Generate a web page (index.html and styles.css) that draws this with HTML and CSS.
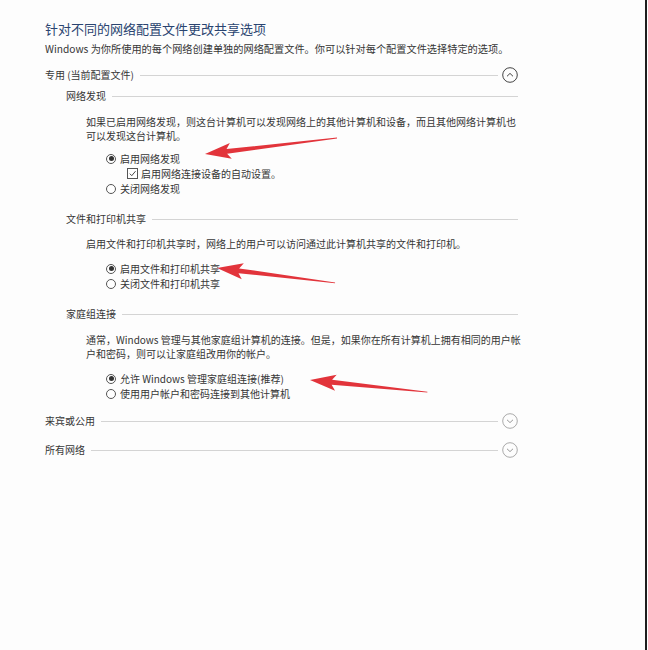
FILE: index.html
```html
<!DOCTYPE html>
<html lang="zh-CN">
<head>
<meta charset="utf-8">
<title>高级共享设置</title>
<link rel="stylesheet" href="styles.css">
</head>
<body>
<div class="page">
  <div class="content">
    <h1 class="title">针对不同的网络配置文件更改共享选项</h1>
    <p class="intro">Windows 为你所使用的每个网络创建单独的网络配置文件。你可以针对每个配置文件选择特定的选项。</p>

    <div class="profile-row">
      <span class="profile-name">专用 (当前配置文件)</span>
      <span class="rule"></span>
      <span class="chev chev-open">
        <svg viewBox="0 0 16 16" width="16" height="16"><circle cx="8" cy="8" r="7.3" fill="none" stroke="#444" stroke-width="1"/><path d="M5 9.3 L8 6.4 L11 9.3" fill="none" stroke="#444" stroke-width="1"/></svg>
      </span>
    </div>

    <div class="section">
      <div class="sec-row first"><span class="sec-name">网络发现</span><span class="rule"></span></div>
      <p class="desc">如果已启用网络发现，则这台计算机可以发现网络上的其他计算机和设备，而且其他网络计算机也<br>可以发现这台计算机。</p>
      <div class="options opt-a">
        <div class="opt"><span class="radio on"></span>启用网络发现</div>
        <div class="opt sub"><span class="check"><svg viewBox="0 0 10 10" width="10" height="10"><path d="M2 5.2 L4.2 7.4 L8.4 2.4" fill="none" stroke="#333" stroke-width="1"/></svg></span>启用网络连接设备的自动设置。</div>
        <div class="opt"><span class="radio"></span>关闭网络发现</div>
      </div>

      <div class="sec-row"><span class="sec-name">文件和打印机共享</span><span class="rule"></span></div>
      <p class="desc d2">启用文件和打印机共享时，网络上的用户可以访问通过此计算机共享的文件和打印机。</p>
      <div class="options opt-b">
        <div class="opt"><span class="radio on"></span>启用文件和打印机共享</div>
        <div class="opt"><span class="radio"></span>关闭文件和打印机共享</div>
      </div>

      <div class="sec-row"><span class="sec-name">家庭组连接</span><span class="rule"></span></div>
      <p class="desc">通常，Windows 管理与其他家庭组计算机的连接。但是，如果你在所有计算机上拥有相同的用户帐<br>户和密码，则可以让家庭组改用你的帐户。</p>
      <div class="options opt-b">
        <div class="opt"><span class="radio on"></span>允许 Windows 管理家庭组连接(推荐)</div>
        <div class="opt"><span class="radio"></span>使用用户帐户和密码连接到其他计算机</div>
      </div>
    </div>

    <div class="profile-row closed">
      <span class="profile-name">来宾或公用</span>
      <span class="rule"></span>
      <span class="chev">
        <svg viewBox="0 0 16 16" width="16" height="16"><circle cx="8" cy="8" r="7.3" fill="none" stroke="#aaa" stroke-width="1"/><path d="M5 6.8 L8 9.6 L11 6.8" fill="none" stroke="#999" stroke-width="1"/></svg>
      </span>
    </div>
    <div class="profile-row closed">
      <span class="profile-name">所有网络</span>
      <span class="rule"></span>
      <span class="chev">
        <svg viewBox="0 0 16 16" width="16" height="16"><circle cx="8" cy="8" r="7.3" fill="none" stroke="#aaa" stroke-width="1"/><path d="M5 6.8 L8 9.6 L11 6.8" fill="none" stroke="#999" stroke-width="1"/></svg>
      </span>
    </div>
  </div>

  <svg class="arrows" viewBox="0 0 648 650" width="648" height="650">
    <g fill="#e2343b">
      <polygon transform="translate(205 154) rotate(-6.9)" points="0,0 26,-8 22,-2.4 133,-0.4 133,0.4 22,2.4 26,8"/>
      <polygon transform="translate(217 268) rotate(7.2)" points="0,0 26,-8 22,-2.4 119,-0.4 119,0.4 22,2.4 26,8"/>
      <polygon transform="translate(310 380) rotate(5.9)" points="0,0 26,-8 22,-2.4 118,-0.4 118,0.4 22,2.4 26,8"/>
    </g>
  </svg>
</div>
</body>
</html>
```

FILE: styles.css
```css
html, body {
  margin: 0;
  padding: 0;
  background: #ffffff;
}

body {
  font-family: "Noto Sans CJK SC", "Noto Sans", sans-serif;
  color: #363636;
  font-size: 10px;
}

.page {
  position: relative;
  width: 647px;
  height: 650px;
  background: #fdfdfd;
  border-right: 2px solid #1e1e1e;
  box-sizing: border-box;
  overflow: hidden;
}

.content {
  padding: 20px 0 0 45px;
  width: 473px;
}

.title {
  margin: 0;
  font-size: 13px;
  font-weight: normal;
  line-height: 18px;
  color: #2a4470;
}

.intro {
  margin: 4px 0 0;
  line-height: 14px;
  white-space: nowrap;
  font-size: 10.2px;
}

.profile-row {
  display: flex;
  align-items: center;
  height: 18px;
  margin-top: 10px;
}

.profile-row.closed {
  margin-top: 11px;
}

.profile-name {
  white-space: nowrap;
  line-height: 14px;
}

.rule {
  flex: 1;
  height: 1px;
  background: #d4d4d4;
  margin-left: 6px;
}

.chev {
  width: 16px;
  height: 16px;
  margin-left: 4px;
  display: flex;
}

.section {
  padding-left: 21px;
}

.sec-row {
  display: flex;
  align-items: center;
  height: 14px;
  margin-top: 16px;
}

.sec-row.first {
  margin-top: 5px;
}

.sec-name {
  white-space: nowrap;
  line-height: 14px;
}

.desc {
  margin: 12px 0 0 20px;
  line-height: 14px;
  white-space: nowrap;
}

.desc.d2 {
  margin-top: 11px;
}

.options {
  margin-left: 40px;
}

.opt-a {
  margin-top: 8px;
}

.opt-b {
  margin-top: 10px;
}

.opt {
  display: flex;
  align-items: center;
  height: 15px;
  white-space: nowrap;
}

.opt.sub {
  padding-left: 21px;
}

.radio {
  width: 10px;
  height: 10px;
  border: 1px solid #555;
  border-radius: 50%;
  margin-right: 4px;
  box-sizing: border-box;
  display: flex;
  align-items: center;
  justify-content: center;
  background: #fff;
}

.radio.on::after {
  content: "";
  width: 5px;
  height: 5px;
  border-radius: 50%;
  background: #333;
}

.check {
  width: 11px;
  height: 11px;
  border: 1px solid #555;
  box-sizing: border-box;
  margin-right: 3px;
  display: flex;
  align-items: center;
  justify-content: center;
  background: #fff;
}

.check svg {
  width: 9px;
  height: 9px;
}

.arrows {
  position: absolute;
  left: 0;
  top: 0;
  pointer-events: none;
}
```
